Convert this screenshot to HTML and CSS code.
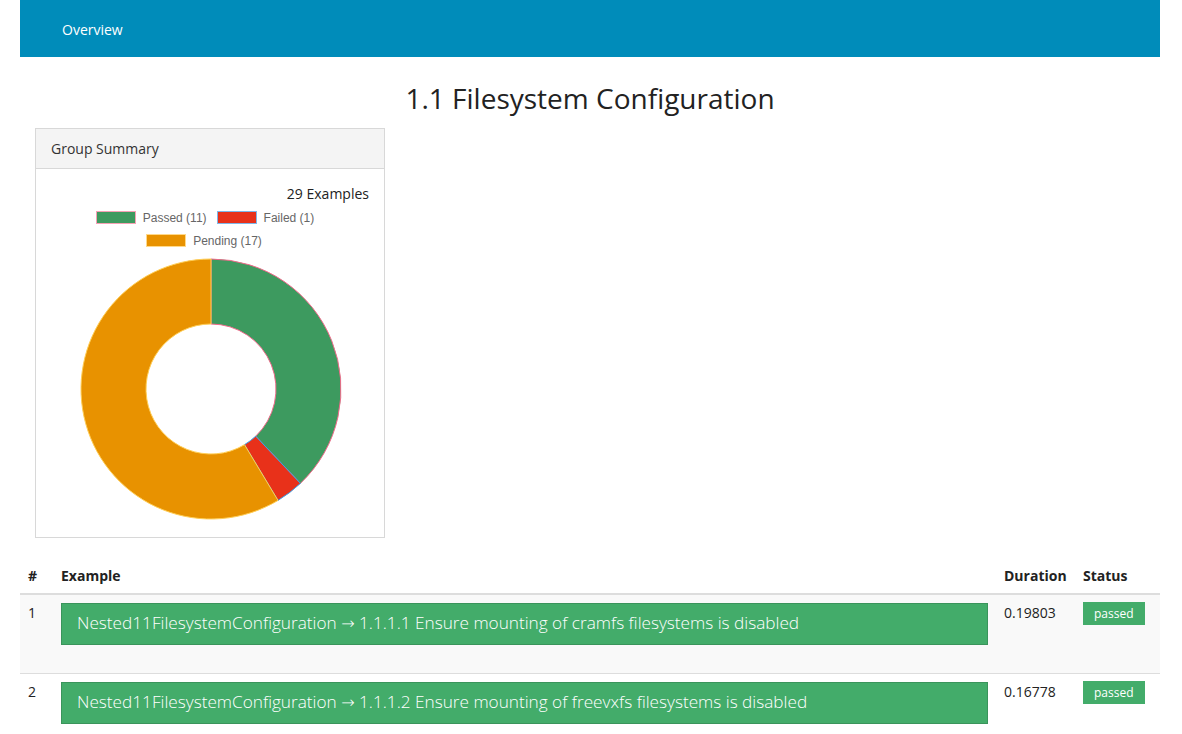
FILE: index.html
```html
<!DOCTYPE html>
<html>
<head>
<meta charset="utf-8">
<link rel="stylesheet" href="styles.css">
</head>
<body>
<div class="page">
  <nav class="topbar"><a class="nav-link">Overview</a></nav>
  <h1 class="title">1.1 Filesystem Configuration</h1>
  <div class="row">
    <div class="panel">
      <div class="panel-head">Group Summary</div>
      <div class="panel-body">
        <div class="chart-title">29 Examples</div>
        <div class="legend">
          <div class="legend-line">
            <span class="legend-item"><span class="swatch sw-pass"></span>Passed (11)</span>
            <span class="legend-item"><span class="swatch sw-fail"></span>Failed (1)</span>
          </div>
          <div class="legend-line">
            <span class="legend-item"><span class="swatch sw-pend"></span>Pending (17)</span>
          </div>
        </div>
        <svg class="donut" width="264" height="264" viewBox="-1 -1 264 264">
          <path d="M131,1 A130,130 0 0 1 220.40,225.38 L175.70,178.19 A65,65 0 0 0 131,66 Z" fill="#3d9a5f" stroke="#f06a8a" stroke-width="1"/>
          <path d="M220.40,225.38 A130,130 0 0 1 198.02,242.40 L164.51,186.70 A65,65 0 0 0 175.70,178.19 Z" fill="#e8311a" stroke="#36a2eb" stroke-width="1"/>
          <path d="M198.02,242.40 A130,130 0 1 1 131,1 L131,66 A65,65 0 1 0 164.51,186.70 Z" fill="#e89200" stroke="#ffce56" stroke-width="1"/>
        </svg>
      </div>
    </div>
  </div>
  <table class="examples">
    <thead>
      <tr><th class="c-num">#</th><th class="c-ex">Example</th><th class="c-dur">Duration</th><th class="c-st">Status</th></tr>
    </thead>
    <tbody>
      <tr class="odd">
        <td>1</td>
        <td><div class="alert-box">Nested11FilesystemConfiguration <span class="arrow">→</span> 1.1.1.1 Ensure mounting of cramfs filesystems is disabled</div></td>
        <td>0.19803</td>
        <td><span class="label">passed</span></td>
      </tr>
      <tr>
        <td>2</td>
        <td><div class="alert-box">Nested11FilesystemConfiguration <span class="arrow">→</span> 1.1.1.2 Ensure mounting of freevxfs filesystems is disabled</div></td>
        <td>0.16778</td>
        <td><span class="label">passed</span></td>
      </tr>
    </tbody>
  </table>
</div>
</body>
</html>
```
FILE: styles.css
```css
html, body {
  margin: 0;
  padding: 0;
  background: #fff;
  font-family: "Open Sans", "Liberation Sans", sans-serif;
  color: #222;
  font-size: 14px;
}
.page {
  padding: 0 22px 0 20px;
}
.topbar {
  background: #008cba;
  height: 57px;
  display: flex;
  align-items: center;
  padding-left: 42px;
}
.nav-link {
  color: #fff;
  font-size: 14px;
  line-height: 20px;
  padding-top: 2px;
}
.title {
  margin: 23px 0 12px;
  text-align: center;
  font-weight: 400;
  font-size: 28px;
  line-height: 36px;
  color: #222;
}
.row {
  padding: 0 15px;
}
.panel {
  width: 348px;
  border: 1px solid #d8d8d8;
  background: #fff;
}
.panel-head {
  background: #f4f4f4;
  border-bottom: 1px solid #d8d8d8;
  height: 39px;
  line-height: 40px;
  padding-left: 15px;
  font-size: 14px;
  color: #333;
}
.panel-body {
  padding: 15px 15px 16px;
  display: flex;
  flex-direction: column;
}
.chart-title {
  text-align: right;
  font-size: 14px;
  line-height: 20px;
  color: #222;
}
.legend {
  display: flex;
  flex-direction: column;
  align-items: center;
  margin-top: 2px;
  font-family: "Liberation Sans", Arial, sans-serif;
  font-size: 12px;
  color: #666;
}
.legend-line {
  display: flex;
  gap: 10px;
  height: 23px;
  align-items: center;
  padding-right: 10px;
}
.legend-line + .legend-line {
  padding-right: 12px;
}
.legend-item {
  display: flex;
  align-items: center;
  gap: 7px;
}
.swatch {
  width: 38px;
  height: 11px;
  display: inline-block;
}
.sw-pass { background: #3d9a5f; border: 1px solid #f5a0b4; }
.sw-fail { background: #e8311a; border: 1px solid #7fb6e8; }
.sw-pend { background: #e89200; border: 1px solid #ffd98a; }
.donut {
  align-self: center;
  margin-top: 5px;
  margin-left: 1px;
  display: block;
}
.examples {
  width: 1140px;
  margin-top: 20px;
  border-collapse: collapse;
  font-size: 14px;
}
.examples th {
  text-align: left;
  font-weight: 700;
  padding: 8px 8px 7px;
  line-height: 20px;
  border-bottom: 2px solid #ddd;
  color: #222;
}
.c-num { width: 17px; }
.c-ex { width: 927px; }
.c-dur { width: 63px; }
.c-st { width: 69px; }
.examples td {
  vertical-align: top;
  padding: 8px 8px 8px;
  line-height: 20px;
  color: #222;
}
.examples tbody tr {
  border-bottom: 1px solid #ddd;
}
.examples tbody tr:last-child { border-bottom: none; }
.examples tr.odd { background: #f9f9f9; }
.alert-box {
  background: #43ac6a;
  border: 1px solid #3a945b;
  color: #fff;
  font-size: 17.2px;
  font-weight: 300;
  line-height: 20px;
  padding: 9px 15px 10px;
  margin-bottom: 20px;
}
.arrow {
  font-family: "DejaVu Sans", sans-serif;
  font-size: 16px;
  font-weight: 200;
}
.label {
  display: inline-block;
  background: #43ac6a;
  color: #fff;
  font-size: 12px;
  line-height: 15px;
  padding: 4px 11px;
  margin-top: -1px;
}
```
